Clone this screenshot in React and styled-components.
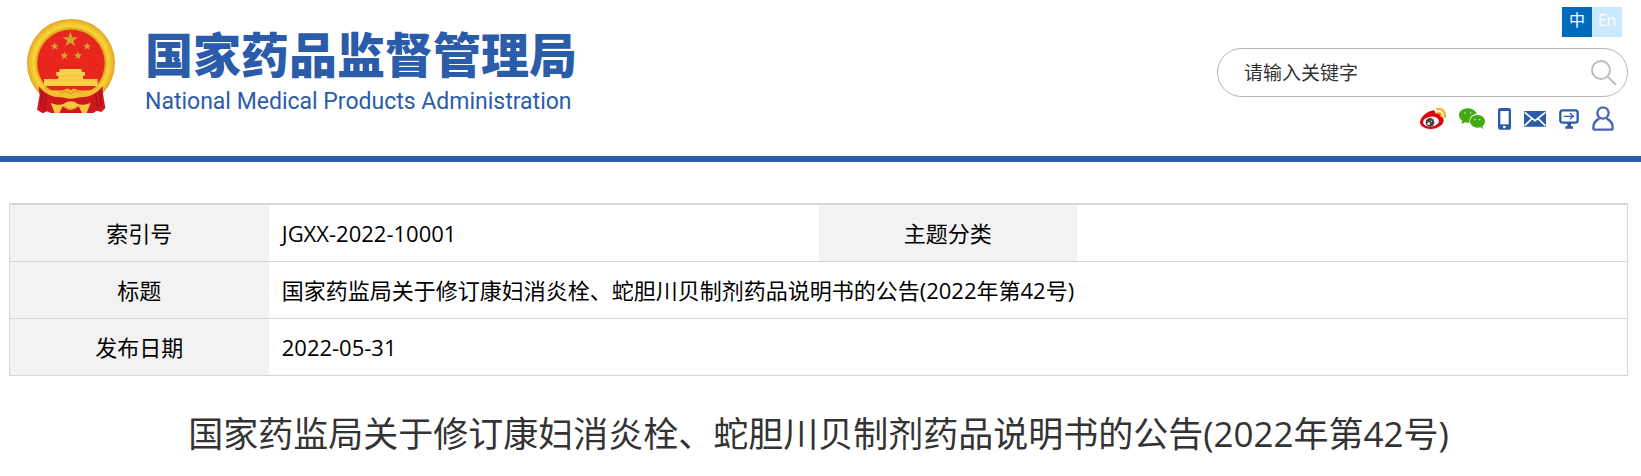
import React from "react";
import styled, { createGlobalStyle } from "styled-components";

const BLUE = "#2a5caa";

const GlobalStyle = createGlobalStyle`
  * {
    box-sizing: border-box;
  }
  body {
    margin: 0;
    background: #fff;
    color: #000;
    font-family: "Open Sans", "Noto Sans CJK SC", sans-serif;
    font-weight: 370;
  }
`;

const Header = styled.header`
  display: flex;
  justify-content: space-between;
  align-items: flex-start;
  padding: 7px 13px 25px 26px;
  border-bottom: 6px solid ${BLUE};
`;

const Brand = styled.a`
  display: flex;
  align-items: flex-start;
  gap: 29px;
  padding-top: 11px;
  color: ${BLUE};
  text-decoration: none;
  white-space: nowrap;
`;

const BrandText = styled.div`
  padding-top: 10px;
`;

const BrandName = styled.div`
  font-family: "Noto Sans CJK SC", sans-serif;
  font-size: 48px;
  font-weight: 900;
  line-height: 48px;
`;

const BrandEnglish = styled.div`
  margin-top: 12px;
  font-family: Roboto, sans-serif;
  font-size: 23px;
  font-weight: 400;
  line-height: 28px;
`;

const Tools = styled.div`
  display: flex;
  flex-direction: column;
  align-items: flex-end;
  width: 411px;
`;

const Languages = styled.nav`
  display: flex;
  margin-right: 6px;
`;

const Language = styled.a`
  width: 30px;
  height: 30px;
  background: ${({ $active }) => ($active ? "#006bbd" : "#cce8ff")};
  color: #fff;
  font-size: 16px;
  font-weight: 400;
  line-height: 26px;
  text-align: center;
  text-decoration: none;
`;

const SearchForm = styled.form`
  display: flex;
  align-items: center;
  width: 100%;
  height: 49px;
  margin-top: 11px;
  padding: 0 10px 0 26px;
  border: 1px solid #b5b5b5;
  border-radius: 27px;
`;

const SearchInput = styled.input`
  flex: 1;
  min-width: 0;
  padding: 0;
  border: 0;
  outline: 0;
  background: none;
  font: inherit;
  font-size: 19px;
  color: #333;
  &::placeholder {
    color: #333;
    opacity: 1;
  }
`;

const SearchButton = styled.button`
  display: flex;
  padding: 0;
  border: 0;
  background: none;
  cursor: pointer;
`;

const IconLinks = styled.nav`
  display: flex;
  align-items: center;
  gap: 13px;
  margin: 9px 14px 0 0;
  a {
    display: flex;
  }
`;

const Main = styled.main`
  padding: 41px 13px 20px 9px;
`;

const InfoTable = styled.table`
  width: 100%;
  table-layout: fixed;
  border: 1px solid #d6d6d6;
  border-top-width: 2px;
  border-bottom: 0;
  border-spacing: 0;
  font-size: 22px;
  line-height: 32px;
`;

const Label = styled.th`
  width: 16%;
  height: 57px;
  padding: 0;
  background: #f2f2f2;
  border-bottom: 1px solid #d6d6d6;
  font-weight: inherit;
  text-align: center;
`;

const Value = styled.td`
  height: 57px;
  padding: 0 13px;
  border-bottom: 1px solid #d6d6d6;
`;

const Title = styled.h1`
  margin: 32px 0 0;
  color: #333;
  font-size: 35px;
  font-weight: inherit;
  line-height: 52px;
  text-align: center;
`;

const STAR = "0,-10 2.4,-3.1 9.5,-3.1 3.8,1.2 5.9,8.1 0,4 -5.9,8.1 -3.8,1.2 -9.5,-3.1 -2.4,-3.1";

const STARS = [
  [181, 87, 2.4],
  [134, 107, 1.3],
  [231, 107, 1.3],
  [163, 135, 1.3],
  [204, 135, 1.3],
];

const Emblem = () => (
  <svg width="90" height="96" viewBox="48 22 270 288" aria-hidden="true">
    <defs>
      <radialGradient id="gold" cx="0.5" cy="0.5" r="0.5">
        <stop offset="0.76" stopColor="#d99b16" />
        <stop offset="0.84" stopColor="#fbd53c" />
        <stop offset="0.93" stopColor="#f0bd2b" />
        <stop offset="1" stopColor="#dca52a" />
      </radialGradient>
    </defs>
    <circle cx="183" cy="157" r="132" fill="url(#gold)" />
    <circle cx="183" cy="158" r="101" fill="#e8261d" />
    {STARS.map(([x, y, s]) => (
      <polygon key={`${x}-${y}`} points={STAR} transform={`translate(${x} ${y}) scale(${s})`} fill="#d3a52c" />
    ))}
    <path
      d="M150 175h64l2 9h9v11h-6v10h44v21H102v-21h43v-10h-6v-11h9z"
      fill="#fbd04a"
    />
    <path d="M146 196h74M102 208h161" stroke="#f0b936" strokeWidth="2" />
    <path d="M86 228l28 9 40 12h58l40-12 26-9 1 22 7 42-12 12-14-4-10 7H123l-12-5-13 6-17-11 8-44z" fill="#cf1720" />
    <path d="M97 240l-5 48M110 243l-7 52M268 240l6 48M256 245l8 48" stroke="#a80f1a" strokeWidth="4" />
    <path
      d="M86 226c20 9 44 17 76 12 8-5 14-6 20 2 6-8 12-7 20-2 32 5 56-3 76-12-16 22-38 32-56 33-14 0-26 5-40 5s-26-5-40-5c-18-1-40-11-56-33z"
      fill="#f2c02f"
    />
    <path d="M150 248c12-8 22-7 32 2 10-9 20-10 32-2" fill="none" stroke="#c98e1c" strokeWidth="3" />
    <path d="M122 276c16 7 28 8 40 3 6-5 14-7 20-7s14 2 20 7c12 5 24 4 40-3l-12 31h-14l-10-20c-8 7-16 10-24 10s-16-3-24-10l-10 20h-14z" fill="#f5c83f" />
    <path d="M162 286c6 6 12 9 20 9s14-3 20-9" fill="none" stroke="#dda428" strokeWidth="4" />
  </svg>
);

const SearchIcon = () => (
  <svg width="26" height="26" viewBox="0 0 26 26" fill="none" stroke="#bdbdbd" strokeWidth="2">
    <circle cx="10" cy="10" r="9" />
    <path d="M17 17l8 8" />
  </svg>
);

const WeiboIcon = () => (
  <svg width="26" height="21" viewBox="0 0 78 63">
    <path
      d="M33 9c8-5 14-1 13 8 10-4 18-1 16 8 8 3 11 9 8 18-5 12-20 20-38 20C14 63 0 55 0 43 0 31 17 12 33 9z"
      fill="#e1000f"
    />
    <ellipse cx="33" cy="41" rx="24" ry="15" fill="#fff" transform="rotate(-6 33 41)" />
    <circle cx="30" cy="43" r="13" fill="#444" />
    <circle cx="26" cy="47" r="4" fill="#fff" />
    <circle cx="34" cy="40" r="2" fill="#fff" />
    <path d="M49 4c16-5 29 8 25 25M52 15c8-2 14 4 12 12" fill="none" stroke="#f0b41c" strokeWidth="7" />
  </svg>
);

const WechatIcon = () => (
  <svg width="26" height="21" viewBox="0 0 78 63">
    <g fill="#45a914">
      <path d="M26 1C11 1 0 10 0 22c0 7 4 13 10 17l-3 9 11-5c5 1 9 2 14 1C29 30 38 19 53 18 50 8 39 1 26 1z" />
      <path d="M55 21c-12 0-22 8-22 19s10 19 22 19c3 0 6 0 9-1l9 5-3-8c5-4 8-9 8-15 0-11-10-19-23-19z" />
    </g>
    <g fill="#fff">
      <circle cx="18" cy="15" r="2" />
      <circle cx="35" cy="15" r="2" />
      <circle cx="48" cy="35" r="2" />
      <circle cx="62" cy="35" r="2" />
    </g>
  </svg>
);

const PhoneIcon = () => (
  <svg width="13" height="22" viewBox="0 0 39 66">
    <rect width="39" height="65" rx="6" fill={BLUE} />
    <rect x="7" y="9" width="25" height="40" fill="#fff" />
    <circle cx="19" cy="57" r="4" fill="#fff" />
  </svg>
);

const MailIcon = () => (
  <svg width="22" height="16" viewBox="0 0 66 48">
    <rect width="66" height="47" rx="2" fill={BLUE} />
    <path d="M2 4l31 25L64 4M2 44l22-21M64 44L42 23" fill="none" stroke="#fff" strokeWidth="5" />
  </svg>
);

const MonitorIcon = () => (
  <svg width="20" height="20" viewBox="0 0 60 60">
    <rect x="4" y="4" width="52" height="37" rx="7" fill="none" stroke={BLUE} strokeWidth="7" />
    <path d="M14 22h28M33 13l10 9-10 9" fill="none" stroke={BLUE} strokeWidth="4" />
    <path d="M25 42h11v10h6v7H19v-7h6z" fill={BLUE} />
  </svg>
);

const UserIcon = () => (
  <svg width="22" height="25" viewBox="0 0 66 75" fill="none" stroke="#4a66b0" strokeWidth="7">
    <circle cx="33" cy="21" r="17" />
    <path d="M22 38C9 44 4 54 4 65c0 4 2 6 6 6h46c4 0 6-2 6-6 0-11-5-21-18-27" />
  </svg>
);

const LINKS = [
  { label: "微博", Icon: WeiboIcon },
  { label: "微信", Icon: WechatIcon },
  { label: "手机版", Icon: PhoneIcon },
  { label: "邮箱", Icon: MailIcon },
  { label: "电脑版", Icon: MonitorIcon },
  { label: "个人中心", Icon: UserIcon },
];

const App = () => (
  <>
    <GlobalStyle />
    <Header>
      <Brand href="#">
        <Emblem />
        <BrandText>
          <BrandName>国家药品监督管理局</BrandName>
          <BrandEnglish>National Medical Products Administration</BrandEnglish>
        </BrandText>
      </Brand>
      <Tools>
        <Languages>
          <Language href="#" $active>
            中
          </Language>
          <Language href="#">En</Language>
        </Languages>
        <SearchForm role="search" onSubmit={(e) => e.preventDefault()}>
          <SearchInput type="text" placeholder="请输入关键字" aria-label="请输入关键字" />
          <SearchButton type="submit" aria-label="搜索">
            <SearchIcon />
          </SearchButton>
        </SearchForm>
        <IconLinks>
          {LINKS.map(({ label, Icon }) => (
            <a key={label} href="#" aria-label={label}>
              <Icon />
            </a>
          ))}
        </IconLinks>
      </Tools>
    </Header>
    <Main>
      <InfoTable>
        <tbody>
          <tr>
            <Label scope="row">索引号</Label>
            <Value>JGXX-2022-10001</Value>
            <Label scope="row">主题分类</Label>
            <Value />
          </tr>
          <tr>
            <Label scope="row">标题</Label>
            <Value colSpan={3}>国家药监局关于修订康妇消炎栓、蛇胆川贝制剂药品说明书的公告(2022年第42号)</Value>
          </tr>
          <tr>
            <Label scope="row">发布日期</Label>
            <Value colSpan={3}>2022-05-31</Value>
          </tr>
        </tbody>
      </InfoTable>
      <Title>国家药监局关于修订康妇消炎栓、蛇胆川贝制剂药品说明书的公告(2022年第42号)</Title>
    </Main>
  </>
);

export default App;
